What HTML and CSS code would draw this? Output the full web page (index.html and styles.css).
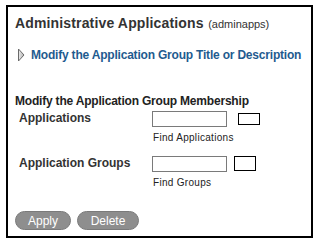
FILE: index.html
```html
<!DOCTYPE html>
<html>
<head>
<meta charset="utf-8">
<link rel="stylesheet" href="styles.css">
</head>
<body>
<div class="panel">
  <div class="title"><span class="title-main">Administrative Applications</span> <span class="title-sub">(adminapps)</span></div>
  <div class="toggle">
    <svg class="arrow" width="8" height="14" viewBox="0 0 8 14">
      <defs>
        <linearGradient id="g" x1="0" y1="0" x2="1" y2="0">
          <stop offset="0" stop-color="#ececec"/>
          <stop offset="1" stop-color="#b0b0b0"/>
        </linearGradient>
      </defs>
      <path d="M1.5 1 L7 7 L1.5 13 Z" fill="url(#g)" stroke="#6a6a6a" stroke-width="1" stroke-linejoin="round"/>
    </svg>
    <span class="link">Modify the Application Group Title or Description</span>
  </div>
  <div class="section-title">Modify the Application Group Membership</div>
  <div class="row">
    <div class="label">Applications</div>
    <div class="field">
      <div class="inputs"><span class="input"></span><span class="btnbox"></span></div>
      <div class="hint">Find Applications</div>
    </div>
  </div>
  <div class="row row2">
    <div class="label">Application Groups</div>
    <div class="field">
      <div class="inputs"><span class="input"></span><span class="btnbox btnbox2"></span></div>
      <div class="hint">Find Groups</div>
    </div>
  </div>
  <div class="buttons">
    <span class="pill apply">Apply</span>
    <span class="pill delete">Delete</span>
  </div>
</div>
</body>
</html>
```
FILE: styles.css
```css
html, body {
  margin: 0;
  padding: 0;
  background: #fff;
}
body {
  font-family: "Liberation Sans", Arial, sans-serif;
  color: #222;
}
.panel {
  margin: 5px 0 0 6px;
  width: 307px;
  height: 233px;
  box-sizing: border-box;
  border: 2px solid #000;
  padding: 6px 0 0 7px;
  display: flex;
  flex-direction: column;
}
.title {
  line-height: 20px;
  color: #333;
}
.title-main {
  font-size: 14px;
  font-weight: bold;
  letter-spacing: 0.15px;
}
.title-sub {
  font-size: 11px;
}
.toggle {
  display: flex;
  align-items: center;
  margin-top: 13px;
  margin-left: 2px;
  gap: 6px;
}
.arrow {
  display: block;
}
.link {
  font-size: 12px;
  font-weight: bold;
  color: #1f5b8f;
  letter-spacing: -0.2px;
  line-height: 16px;
}
.section-title {
  margin-top: 31px;
  font-size: 12px;
  font-weight: bold;
  color: #222;
  letter-spacing: -0.2px;
  line-height: 15px;
}
.row {
  display: flex;
  margin-top: 2px;
}
.row2 {
  margin-top: 12px;
}
.label {
  width: 137px;
  padding-left: 4px;
  box-sizing: border-box;
  font-size: 12px;
  font-weight: bold;
  color: #333;
  line-height: 15px;
}
.field {
  display: flex;
  flex-direction: column;
}
.inputs {
  display: flex;
  align-items: flex-start;
  gap: 11px;
}
.input {
  display: block;
  width: 75px;
  height: 16px;
  box-sizing: border-box;
  border: 1px solid #7a7a7a;
  background: #fff;
}
.btnbox {
  display: block;
  width: 22px;
  height: 12px;
  margin-top: 2px;
  box-sizing: border-box;
  border: 1px solid #000;
}
.btnbox2 {
  width: 22px;
  height: 15px;
  margin-top: 0;
  margin-left: -4px;
}
.hint {
  font-size: 10px;
  color: #222;
  letter-spacing: 0.3px;
  line-height: 12px;
  margin-top: 5px;
  padding-left: 1px;
}
.buttons {
  display: flex;
  gap: 6px;
  margin-top: 22px;
}
.pill {
  display: inline-flex;
  align-items: center;
  justify-content: center;
  height: 19px;
  box-sizing: border-box;
  border-radius: 10px;
  background: #8e8e8e;
  border: 1px solid #7a7a7a;
  color: #fff;
  font-size: 12px;
}
.apply {
  width: 56px;
}
.delete {
  width: 62px;
}
```
